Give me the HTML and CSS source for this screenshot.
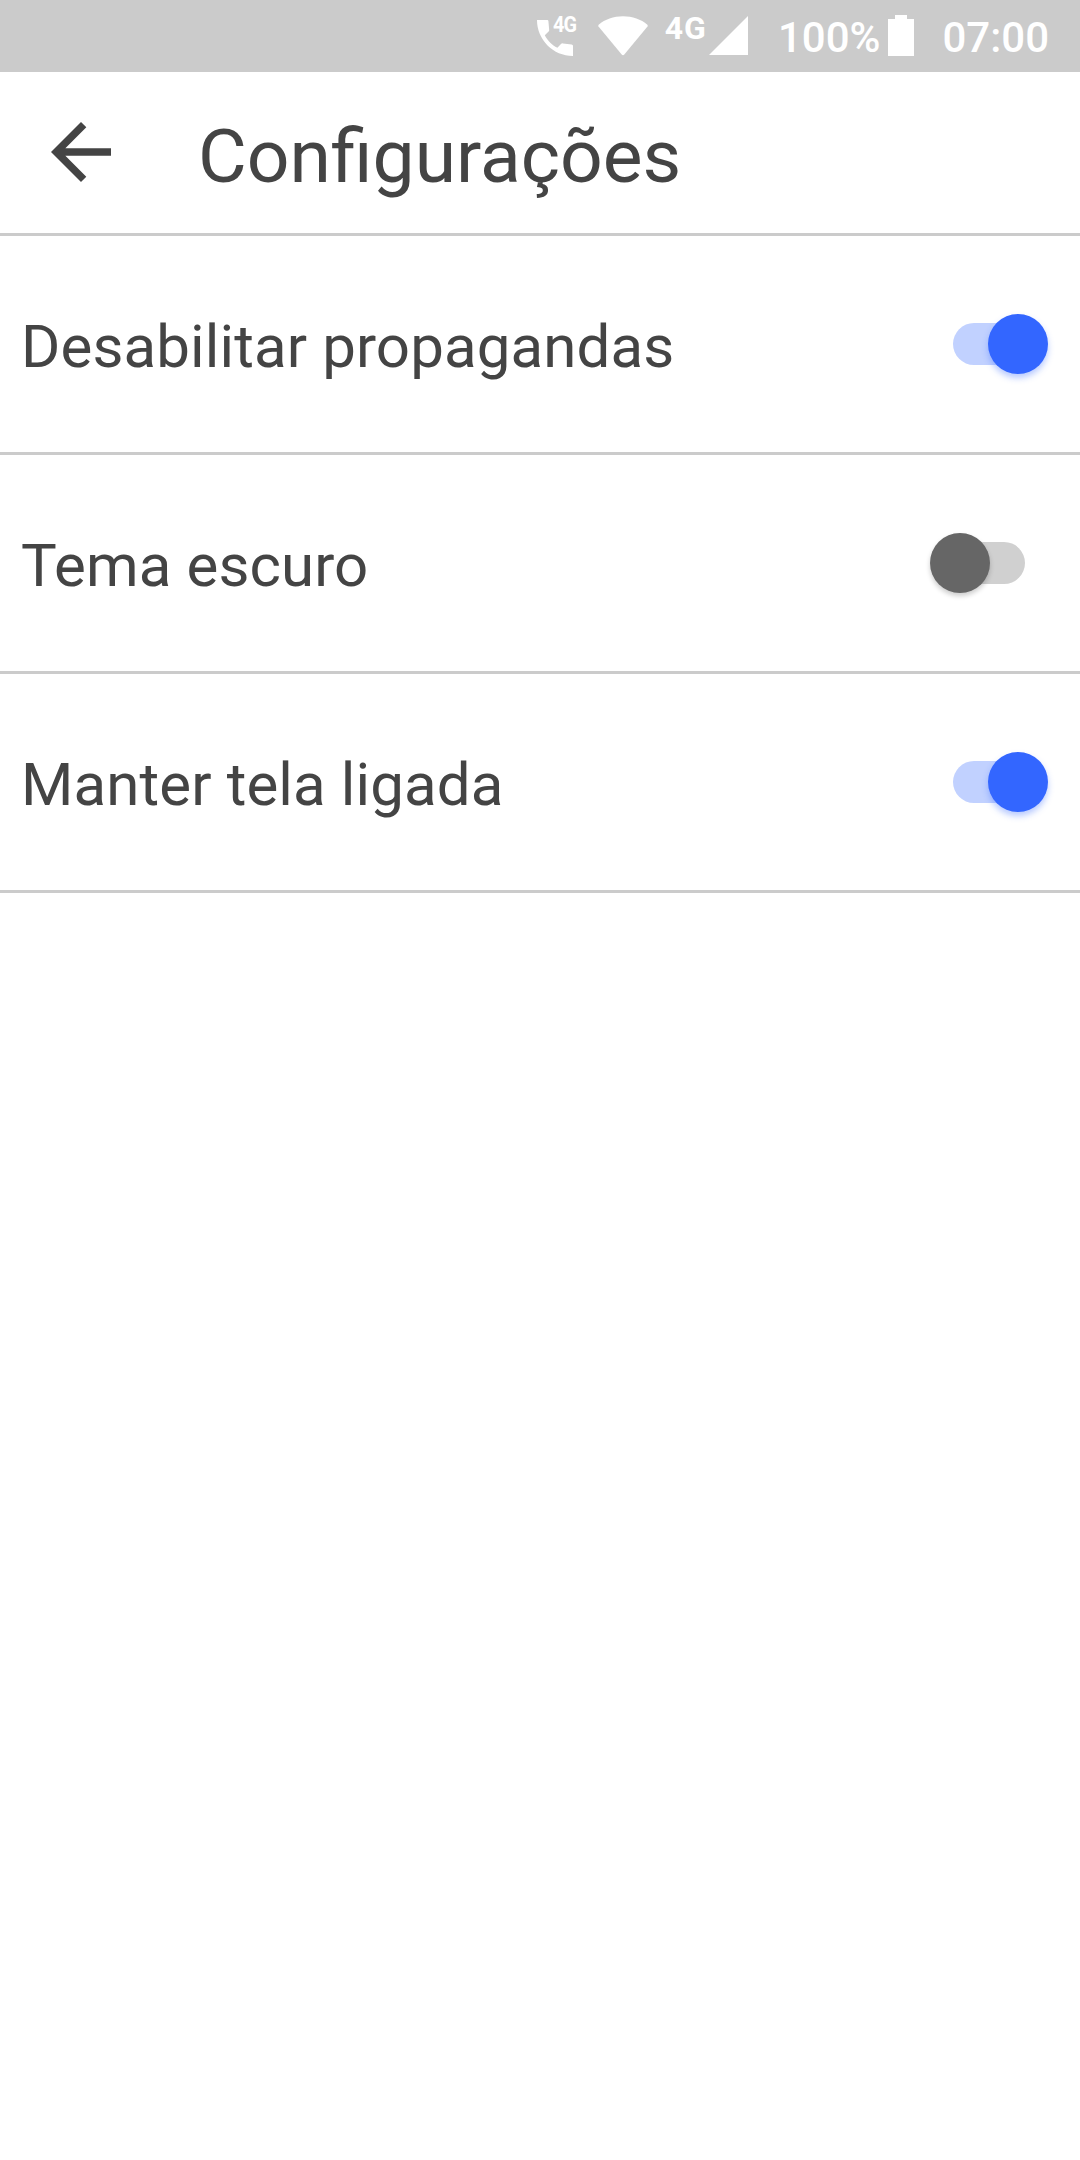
FILE: index.html
```html
<!DOCTYPE html>
<html lang="pt-BR">
<head>
    <meta charset="UTF-8">
    <meta name="viewport" content="width=device-width, initial-scale=1.0">
    <title>Configurações</title>
    <link rel="stylesheet" href="styles.css">
</head>
<body>
    <div class="status-bar">
        <div class="volte">
            <svg width="36" height="36" viewBox="3 3 18 18"><path d="M6.9 10.6C8.2 13.200 10.500 15.600 13.200 16.900L15.100 14.900Q15.400 14.600 16 14.700L20.300 15.200Q21 15.300 21 15.900V21C11.100 21 3 12.900 3 3H8.200Q8.600 3 8.700 3.500L9.100 8.100Q9.100 8.500 8.800 8.800z" fill="#fff"/></svg>
            <span class="volte-label">4G</span>
        </div>
        <svg class="wifi" width="50" height="40" viewBox="0 0 50 40"><path d="M25 0.3C15.500 0.3 7 3.300 0.600 8.800C0.200 9.300 0.200 9.900 0.500 10.400L23.700 38.600Q25 39.800 26.300 38.600L49.500 10.400C49.800 9.900 49.800 9.300 49.400 8.800C43 3.300 34.500 0.300 25 0.300Z" fill="#fff"/></svg>
        <span class="network">4G</span>
        <svg class="signal" width="39" height="39" viewBox="0 0 39 39"><path d="M0 39L39 0V39Z" fill="#fff"/></svg>
        <span class="percent">100%</span>
        <svg class="battery" width="26" height="41" viewBox="0 0 26 41"><path d="M7 0H19V4H26V41H0V4H7Z" fill="#fff"/></svg>
        <span class="clock">07:00</span>
    </div>

    <div class="header">
        <svg class="back" width="60" height="60" viewBox="4 4 16 16"><path d="M20 11H7.830l5.590-5.590L12 4l-8 8 8 8 1.410-1.410L7.830 13H20v-2z" fill="#444"/></svg>
        <h1>Configurações</h1>
    </div>

    <div class="row">
        <span class="label">Desabilitar propagandas</span>
        <div class="switch on"><div class="thumb"></div></div>
    </div>
    <div class="row">
        <span class="label">Tema escuro</span>
        <div class="switch"><div class="thumb"></div></div>
    </div>
    <div class="row">
        <span class="label">Manter tela ligada</span>
        <div class="switch on"><div class="thumb"></div></div>
    </div>
</body>
</html>
```
FILE: styles.css
```css
body {
    font-family: Roboto, sans-serif;
    background-color: #fff;
    color: #444;
    margin: 0;
    min-height: 100vh;
}

svg {
    display: block;
    flex-shrink: 0;
}

.status-bar {
    display: flex;
    align-items: flex-start;
    justify-content: flex-end;
    height: 72px;
    padding-right: 31px;
    box-sizing: border-box;
    background-color: #cbcbcb;
    color: #fff;
    font-weight: 500;
}

.volte {
    position: relative;
    margin-top: 20px;
    margin-right: 25px;
}

.volte-label {
    position: absolute;
    left: 16px;
    top: -6px;
    font-size: 22px;
    line-height: 22px;
    font-weight: 700;
    letter-spacing: -1px;
    transform: scaleX(0.9);
    transform-origin: left;
}

.wifi {
    margin-top: 16px;
    margin-right: 17px;
}

.network {
    font-size: 32px;
    line-height: 32px;
    font-weight: 700;
    letter-spacing: 1px;
    margin-top: 12px;
    margin-right: 2px;
}

.signal {
    margin-top: 16px;
    margin-right: 30px;
}

.percent,
.clock {
    font-size: 42px;
    line-height: 48px;
    margin-top: 14px;
}

.percent {
    margin-right: 8px;
}

.battery {
    margin-top: 15px;
    margin-right: 28px;
}

.header {
    display: flex;
    align-items: center;
    height: 161px;
    padding-left: 51px;
    border-bottom: 3px solid #cbcbcb;
}

.back {
    margin-bottom: 1px;
}

h1 {
    font-size: 75px;
    line-height: 88px;
    font-weight: 400;
    margin: 7px 0 0 87px;
}

.row {
    display: flex;
    align-items: center;
    justify-content: space-between;
    height: 216px;
    padding-left: 21px;
    border-bottom: 3px solid #cbcbcb;
}

.label {
    font-size: 60px;
    line-height: 71px;
    letter-spacing: 0.12px;
    margin-top: 5px;
}

.switch {
    display: flex;
    align-items: center;
    width: 87px;
    height: 42px;
    margin-right: 55px;
    border-radius: 21px;
    background-color: #d0d0d0;
}

.thumb {
    width: 60px;
    height: 60px;
    flex-shrink: 0;
    margin-left: -8.5px;
    border-radius: 50%;
    background-color: #666;
    box-shadow: 0 3px 5px rgba(0, 0, 0, 0.2);
}

.switch.on {
    justify-content: flex-end;
    margin-right: 40px;
    background-color: #c1d1ff;
}

.switch.on .thumb {
    margin-left: 0;
    margin-right: -8px;
    background-color: #3366ff;
    box-shadow: 0 4px 6px rgba(51, 102, 255, 0.35);
}
```
